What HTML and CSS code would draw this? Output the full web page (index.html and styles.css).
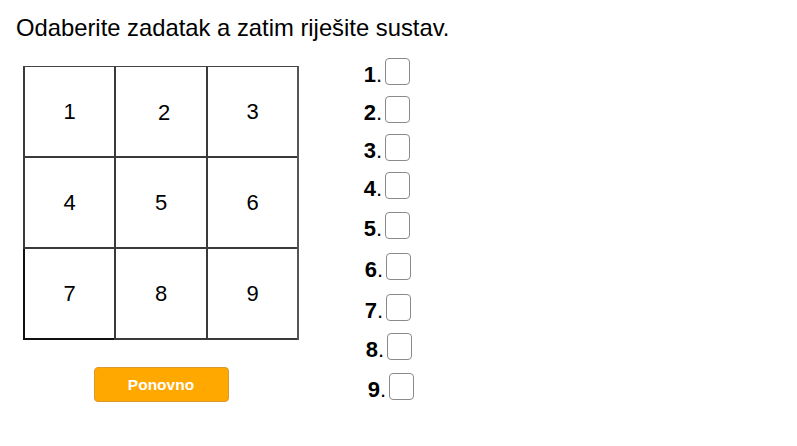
FILE: index.html
```html
<!DOCTYPE html>
<html>
<head>
<meta charset="utf-8">
<link rel="stylesheet" href="styles.css">
</head>
<body>
<div class="page">
  <h1 class="title">Odaberite zadatak a zatim riješite sustav.</h1>
  <div class="main">
    <div class="left">
      <div class="board">
        <div class="cell c1">1</div>
        <div class="cell c2">2</div>
        <div class="cell c3">3</div>
        <div class="cell c4">4</div>
        <div class="cell c5">5</div>
        <div class="cell c6">6</div>
        <div class="cell c7">7</div>
        <div class="cell c8">8</div>
        <div class="cell c9">9</div>
      </div>
      <button class="btn">Ponovno</button>
    </div>
    <div class="list">
      <div class="row r1"><span class="lab"><b>1</b>.</span><span class="box"></span></div>
      <div class="row r2"><span class="lab"><b>2</b>.</span><span class="box"></span></div>
      <div class="row r3"><span class="lab"><b>3</b>.</span><span class="box"></span></div>
      <div class="row r4"><span class="lab"><b>4</b>.</span><span class="box"></span></div>
      <div class="row r5"><span class="lab"><b>5</b>.</span><span class="box"></span></div>
      <div class="row r6"><span class="lab"><b>6</b>.</span><span class="box"></span></div>
      <div class="row r7"><span class="lab"><b>7</b>.</span><span class="box"></span></div>
      <div class="row r8"><span class="lab"><b>8</b>.</span><span class="box"></span></div>
      <div class="row r9"><span class="lab"><b>9</b>.</span><span class="box"></span></div>
    </div>
  </div>
</div>
</body>
</html>
```

FILE: styles.css
```css
html, body {
  margin: 0;
  padding: 0;
  background: #fff;
}
body {
  font-family: "Liberation Sans", Arial, sans-serif;
  color: #000;
}
.page {
  width: 797px;
  height: 446px;
  overflow: hidden;
}
.title {
  margin: 0;
  padding: 14px 0 0 16px;
  font-size: 23.8px;
  font-weight: normal;
  line-height: 28px;
  height: 28px;
}
.main {
  display: flex;
  padding-left: 23px;
}
.left {
  display: flex;
  flex-direction: column;
  align-items: center;
  width: 276px;
  padding-top: 24px;
}
.board {
  display: grid;
  grid-template-columns: 91px 92px 91px;
  grid-template-rows: 91px 91px 91px;
  border-top: 1px solid #444;
  border-right: 2px solid #555;
  width: 274px;
}
.cell {
  display: flex;
  align-items: center;
  justify-content: center;
  font-size: 22px;
  border-left: 2px solid #3a3a3a;
  border-bottom: 2px solid #3a3a3a;
}
.c2 { padding-left: 6px; padding-top: 2px; }
.c7 {
  border-left: 2px solid #111;
  border-bottom: 2px solid #111;
}
.btn {
  margin-top: 27px;
  width: 135px;
  height: 35px;
  background: #ffa800;
  border: 1px solid #d89a2e;
  border-radius: 4px;
  color: #fff;
  font-family: "Liberation Sans", Arial, sans-serif;
  font-weight: bold;
  font-size: 15.5px;
  padding: 0;
}
.list {
  display: flex;
  flex-direction: column;
  margin-left: 59px;
  padding-top: 16px;
}
.row {
  display: flex;
  align-items: flex-end;
  height: 27px;
}
.lab {
  width: 24px;
  text-align: right;
  font-size: 22px;
  line-height: 20px;
  padding-right: 1px;
}
.lab b { font-weight: bold; }
.box {
  width: 23px;
  height: 25px;
  border: 1px solid #8a8a8a;
  border-radius: 4px;
  margin-left: 2px;
}
.r2, .r3, .r4 { margin-top: 11px; }
.r5 { margin-top: 13px; }
.r6 { margin-top: 14px; margin-left: 1px; }
.r7 { margin-top: 14px; margin-left: 1px; }
.r8 { margin-top: 12px; margin-left: 2px; }
.r9 { margin-top: 13px; margin-left: 4px; }
```
